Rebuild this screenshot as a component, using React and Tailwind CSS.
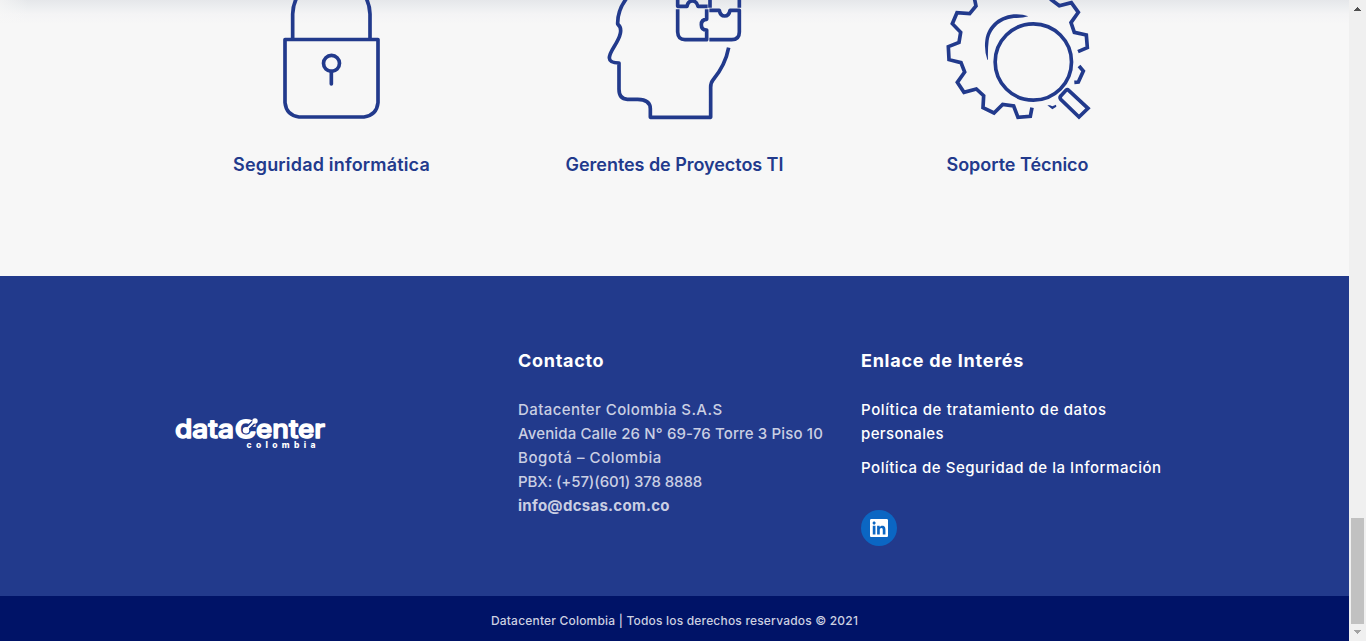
import React from "react";

const navy = "#223a8c";

function Lock() {
  return (
    <svg className="block h-[130px] w-[343px]" viewBox="-330 0 1029 390" fill="none" stroke={navy} strokeWidth="11">
      <path d="M68 118V42Q69 14 80 -6M300 118V42Q299 14 288 -6" />
      <path d="M45 118.500H324V308Q320 346 282 351H87Q49 346 45 308Z" strokeLinejoin="round" />
      <circle cx="184.500" cy="190" r="24" />
      <path d="M184 214V252" strokeLinecap="round" />
    </svg>
  );
}

function Head() {
  return (
    <svg className="block h-[130px] w-[343px]" viewBox="-276 0 1029 390" fill="none" stroke={navy} strokeWidth="11" strokeLinejoin="round">
      <path d="M94 -4Q67 32 68 72Q80 82 76 100C70 130 43 152 43 174Q44 189 72 189V268Q72 297 97 298H128Q166 299 166 326V352H347V262Q347 248 354 240Q391 196 401 143" />
      <path d="M248 -4V19H276Q279 3 292 3Q305 3 309 19H338M345 -4V23M433 -4V23" />
      <path d="M248 28V96Q249 119 270 119H335V90Q319 90 319 74Q319 58 335 58V28" />
      <path d="M343 31H373Q376 48 389 48Q402 48 405 31H433V96Q433 119 410 119H343" />
    </svg>
  );
}

function Gear() {
  return (
    <svg className="block h-[130px] w-[343px]" viewBox="-267 0 1029 390" fill="none" stroke={navy} strokeWidth="11">
      <path d="M118 -6L123 18L104 41L66 38L52 71L77 97L72 127L40 140L42 179L78 188L89 216L67 247L87 277L124 267L146 287L144 323L177 339L203 313L236 318L249 352L286 349L291 323" />
      <path d="M346 -3L373 17L409 8L430 37L408 68L418 97L454 105L457 143L429 155M432 198L445 213L430 246L418 247" />
      <path d="M337 316L345 316L352 319L363 314L364 320L352 328Z" fill={navy} stroke="none" />
      <path d="M157 179Q147 150 151 120C158 75 195 43 245 43Q265 43 280 49Q265 54 245 54C200 54 168 82 161 122Q158 145 159 179Z" fill={navy} stroke="none" />
      <circle cx="295" cy="186" r="114.500" />
      <path d="M401 271L459 325L432 351L377 298Q373 292 378 287L393 271Q397 267 401 271Z" strokeLinejoin="miter" />
    </svg>
  );
}

function Logo() {
  return (
    <svg className="h-[60px] w-[170px]" viewBox="-8 -12 170 60" fill="white" fontFamily="Inter, sans-serif">
      <g fontSize="25" fontWeight="500" stroke="white" strokeWidth="1.400" strokeLinejoin="round">
        <text x="0" y="21.300" textLength="59" lengthAdjust="spacingAndGlyphs">data</text>
        <text x="60" y="21.300" textLength="21" lengthAdjust="spacingAndGlyphs" fontSize="24" strokeWidth="1.800">C</text>
        <text x="81" y="21.300" textLength="69" lengthAdjust="spacingAndGlyphs">enter</text>
      </g>
      <path d="M71 13L80 4" stroke="#223a8c" strokeWidth="5" />
      <path d="M71 13L80 4" stroke="white" strokeWidth="2" />
      <circle cx="71" cy="13.300" r="3.200" />
      <circle cx="80" cy="4" r="2.700" />
      <text x="71.500" y="31" fontSize="8.500" fontWeight="800" textLength="69">colombia</text>
    </svg>
  );
}

const services = [
  { Icon: Lock, label: "Seguridad informática", spacing: "tracking-[0.18px]" },
  { Icon: Head, label: "Gerentes de Proyectos TI", spacing: "tracking-[-0.05px]" },
  { Icon: Gear, label: "Soporte Técnico", spacing: "tracking-[-0.03px]" },
];

export default function App() {
  return (
    <div className="flex h-[641px] w-[1366px] overflow-hidden bg-[#f7f7f7] font-['Inter',sans-serif]">
      <div className="flex w-[1349px] flex-col">
        <section className="h-[276px] bg-[linear-gradient(to_right,#f7f7f7b0_0px,#f7f7f700_28px),linear-gradient(to_bottom,#e5e7ea_0px,#eceef0_7px,#f4f4f5_14px,#f7f7f7_24px)] pl-[160px]">
          <div className="grid w-[1029px] grid-cols-3">
            {services.map(({ Icon, label, spacing }) => (
              <div key={label}>
                <Icon />
                <h3 className="mt-[21px] text-center text-[18px] leading-7 font-semibold text-[#223a8c]">
                  <span className={spacing}>{label}</span>
                </h3>
              </div>
            ))}
          </div>
        </section>
        <footer className="flex h-[320px] bg-[#223a8c] pl-[167px] text-[15px] leading-6 font-medium text-white">
          <div className="w-[351px] pt-[129px]"><Logo /></div>
          <div className="w-[343px] pt-[73px] text-[#cacfe3]">
            <h4 className="text-[18px] font-bold tracking-[0.7px] text-white">Contacto</h4>
            <div className="mt-[25px] whitespace-nowrap">
              <p className="tracking-[0.42px]">Datacenter Colombia S.A.S</p>
              <p className="tracking-[0.14px]">Avenida Calle 26 N° 69-76 Torre 3 Piso 10</p>
              <p className="tracking-[0.57px]">Bogotá – Colombia</p>
              <p className="tracking-[-0.12px]">PBX: (+57)(601) 378 8888</p>
              <p className="font-bold tracking-[0.28px]">info@dcsas.com.co</p>
            </div>
          </div>
          <div className="w-[343px] pt-[73px]">
            <h4 className="text-[18px] font-bold tracking-[0.74px]">Enlace de Interés</h4>
            <p className="mt-[25px] whitespace-nowrap"><span className="tracking-[0.6px]">Política de tratamiento de datos</span><br /><span className="tracking-[0.37px]">personales</span></p>
            <p className="mt-[10px] tracking-[0.52px] whitespace-nowrap">Política de Seguridad de la Información</p>
            <div className="mt-[30px] flex size-9 items-center justify-center rounded-full bg-[#0b66c3]">
              <svg className="size-[18px]" viewBox="0 32 448 448" preserveAspectRatio="none" fill="white">
                <path d="M416 32H31.900C14.300 32 0 46.500 0 64.300v383.400C0 465.500 14.300 480 31.900 480H416c17.600 0 32-14.500 32-32.300V64.300c0-17.800-14.400-32.300-32-32.300zM135.400 416H69V202.200h66.500V416zm-33.200-243c-21.300 0-38.500-17.300-38.500-38.500S80.900 96 102.200 96c21.200 0 38.500 17.300 38.500 38.500 0 21.300-17.200 38.500-38.500 38.500zm282.100 243h-66.400V312c0-24.800-.5-56.700-34.500-56.700-34.600 0-39.900 27-39.900 54.900V416h-66.400V202.200h63.700v29.200h.9c8.900-16.800 30.600-34.500 62.900-34.500 67.200 0 79.700 44.300 79.700 101.900V416z" />
              </svg>
            </div>
          </div>
        </footer>
        <div className="flex h-[45px] justify-center bg-[#001367] pt-[13px] text-[12px] leading-6 font-medium tracking-[0.19px] text-[#ccd0e1]">
          <span>Datacenter Colombia | Todos los derechos reservados © 2021</span>
        </div>
      </div>
      <div className="flex w-[17px] flex-col items-center bg-[#f0f0f0]">
        <svg className="h-[17px] w-[17px]" viewBox="0 0 17 17" shapeRendering="crispEdges" fill="#505050"><path d="M5 11L8.500 7L12 11Z" /></svg>
        <div className="mt-[501px] h-[106px] w-[13px] bg-[#c1c1c1]" />
        <svg className="h-[17px] w-[17px]" viewBox="0 0 17 17" shapeRendering="crispEdges" fill="#a3a3a3"><path d="M5 6L8.500 10L12 6Z" /></svg>
      </div>
    </div>
  );
}
